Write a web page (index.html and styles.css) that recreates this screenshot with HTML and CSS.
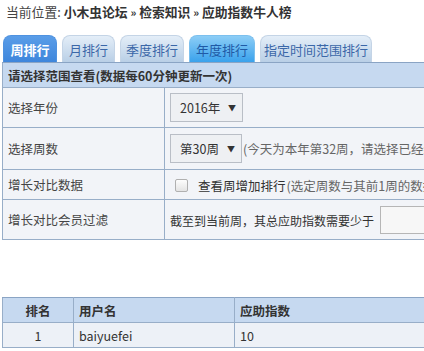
FILE: index.html
```html
<!DOCTYPE html>
<html>
<head>
<meta charset="utf-8">
<link rel="stylesheet" href="styles.css">
</head>
<body>
<div class="crumb">当前位置: <b>小木虫论坛</b> <b class="sep">»</b> <b>检索知识</b> <b class="sep">»</b> <b>应助指数牛人榜</b></div>
<div class="tabs">
  <div class="tab active t1">周排行</div>
  <div class="tab t2">月排行</div>
  <div class="tab t3">季度排行</div>
  <div class="tab bright t4">年度排行</div>
  <div class="tab t5">指定时间范围排行</div>
</div>
<table class="form">
  <colgroup><col class="fc1"><col class="fc2"></colgroup>
  <tr class="head"><th colspan="2">请选择范围查看(数据每60分钟更新一次)</th></tr>
  <tr class="r1"><td class="lab">选择年份</td><td><span class="sel w1">2016年<i>▼</i></span></td></tr>
  <tr class="r2"><td class="lab">选择周数</td><td><span class="sel w2">第30周<i>▼</i></span><span class="note">(今天为本年第32周，请选择已经结束的周数)</span></td></tr>
  <tr class="r3"><td class="lab">增长对比数据</td><td><span class="chk"></span><span class="ck-text">查看周增加排行</span><span class="note">(选定周数与其前1周的数据进行对比)</span></td></tr>
  <tr class="r4"><td class="lab">增长对比会员过滤</td><td><span class="filt">截至到当前周，其总应助指数需要少于</span><span class="inp"></span></td></tr>
</table>
<table class="rank">
  <colgroup><col class="rc1"><col class="rc2"><col class="rc3"></colgroup>
  <tr class="head"><th class="c1">排名</th><th>用户名</th><th>应助指数</th></tr>
  <tr><td class="c1">1</td><td>baiyuefei</td><td>10</td></tr>
</table>
</body>
</html>
```

FILE: styles.css
```css
html, body {
  margin: 0;
  padding: 0;
  overflow: hidden;
  background: #fff;
}
body {
  font-family: "Noto Sans CJK SC", "Noto Sans", sans-serif;
  font-size: 12.5px;
  color: #333;
  width: 424px;
  height: 351px;
}
.crumb {
  height: 22px;
  line-height: 22px;
  padding: 1px 0 0 6px;
  color: #444;
  white-space: nowrap;
  font-size: 12.8px;
}
.crumb b { font-weight: bold; color: #333; }
.crumb .sep { font-size: 11px; }
.tabs {
  display: flex;
  margin-top: 12px;
  padding-left: 3px;
  gap: 5px;
  height: 27px;
}
.tab {
  height: 27px;
  line-height: 28px;
  text-align: center;
  border-radius: 8px 8px 0 0;
  background: linear-gradient(#e4eef8, #b9cfe6);
  color: #3b67a8;
  font-size: 13px;
  box-sizing: border-box;
  border: 1px solid #c4d4e6;
  border-bottom: none;
}
.tab.active {
  background: linear-gradient(#5a9de8, #3e86dc);
  color: #fff;
  font-weight: bold;
  border-color: #4f92e0;
}
.tab.bright {
  background: linear-gradient(#8ccdf6, #3aa2ec);
  color: #1f5aa6;
  border-color: #7cc0ee;
}
.t1 { width: 54px; }
.t2 { width: 53px; }
.t3 { width: 64px; }
.t4 { width: 66px; }
.t5 { width: 112px; }

table {
  border-collapse: collapse;
  margin-left: 2px;
  width: 620px;
  table-layout: fixed;
}
.fc1 { width: 162px; }
.rc1 { width: 71px; }
.rc2 { width: 161px; }
.form th, .form td, .rank th, .rank td {
  border: 1px solid #98aec8;
  padding: 0 0 0 5px;
  white-space: nowrap;
  overflow: hidden;
  text-align: left;
}
.form { border-left: 1px solid #6f8cb2; }
.form .head th {
  height: 24px;
  background: #c6d9f0;
  font-weight: bold;
  color: #333;
  border-top: 1px solid #8aa4c4;
}
.form td {
  background: #f2f4f8;
  color: #444;
}
.r1 td { height: 39px; }
.r2 td { height: 41px; }
.r3 td { height: 29px; }
.r4 td { height: 39px; }
.sel {
  display: inline-flex;
  align-items: center;
  justify-content: space-between;
  box-sizing: border-box;
  height: 29px;
  padding: 0 6px 0 9px;
  border: 1px solid #b9bec6;
  background: #eef0f3;
  color: #333;
  vertical-align: middle;
}
.sel i {
  font-style: normal;
  font-size: 8px;
  color: #333;
}
.w1 { width: 73px; }
.w2 { width: 72px; }
.note { color: #666; vertical-align: middle; margin-left: 1px; }
.chk {
  display: inline-block;
  width: 11px;
  height: 11px;
  border: 1px solid #b0b0b0;
  border-radius: 2px;
  background: linear-gradient(#fdfdfd, #e4e4e4);
  vertical-align: middle;
  margin: 0 10px 0 5px;
}
.ck-text { color: #333; vertical-align: middle; }
.filt { color: #333; vertical-align: middle; font-size: 12px; }
.inp {
  display: inline-block;
  width: 80px;
  height: 26px;
  border: 1px solid #b6b6b6;
  background: #f7f7f7;
  vertical-align: middle;
  margin-left: 6px;
}
.rank {
  margin-top: 57px;
  border-left: 1px solid #6f8cb2;
}
.rank .head th {
  height: 24px;
  background: #c6d9f0;
  font-weight: bold;
  color: #333;
  border-top: 1px solid #8aa4c4;
}
.rank td {
  height: 24px;
  background: #edf1f7;
  color: #333;
}
.rank .c1 { text-align: center; padding: 0; }
```
